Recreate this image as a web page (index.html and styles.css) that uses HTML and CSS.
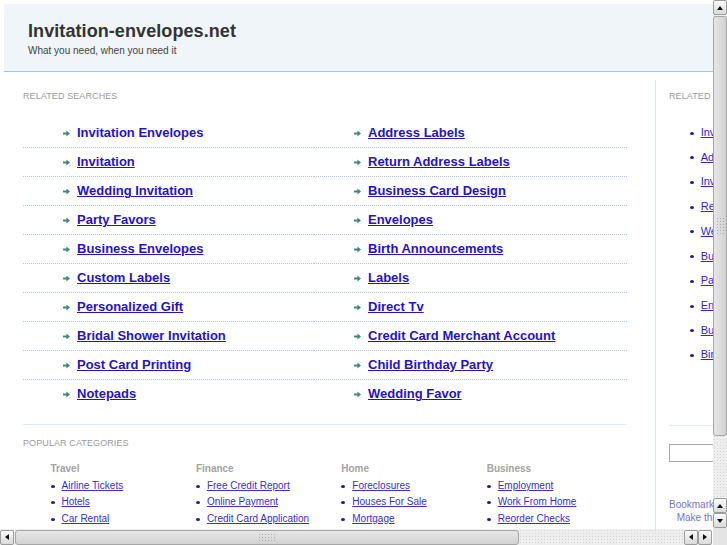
FILE: index.html
```html
<!DOCTYPE html>
<html>
<head>
<meta charset="utf-8">
<title>Invitation-envelopes.net</title>
<link rel="stylesheet" href="styles.css">
</head>
<body>
<div class="page">
  <div class="header">
    <h1 class="title">Invitation-envelopes.net</h1>
    <div class="tagline">What you need, when you need it</div>
  </div>
  <div class="content">
    <div class="main">
      <div class="label">Related Searches</div>
      <div class="links">
        <ul>
          <li><svg class="arrow" viewBox="0 0 7 7"><path d="M0 2.6h3.4V0.4L7 3.5 3.4 6.6V4.4H0z"/></svg><a class="plain" href="#">Invitation Envelopes</a></li>
          <li><svg class="arrow" viewBox="0 0 7 7"><path d="M0 2.6h3.4V0.4L7 3.5 3.4 6.6V4.4H0z"/></svg><a href="#">Invitation</a></li>
          <li><svg class="arrow" viewBox="0 0 7 7"><path d="M0 2.6h3.4V0.4L7 3.5 3.4 6.6V4.4H0z"/></svg><a href="#">Wedding Invitation</a></li>
          <li><svg class="arrow" viewBox="0 0 7 7"><path d="M0 2.6h3.4V0.4L7 3.5 3.4 6.6V4.4H0z"/></svg><a href="#">Party Favors</a></li>
          <li><svg class="arrow" viewBox="0 0 7 7"><path d="M0 2.6h3.4V0.4L7 3.5 3.4 6.6V4.4H0z"/></svg><a href="#">Business Envelopes</a></li>
          <li><svg class="arrow" viewBox="0 0 7 7"><path d="M0 2.6h3.4V0.4L7 3.5 3.4 6.6V4.4H0z"/></svg><a href="#">Custom Labels</a></li>
          <li><svg class="arrow" viewBox="0 0 7 7"><path d="M0 2.6h3.4V0.4L7 3.5 3.4 6.6V4.4H0z"/></svg><a href="#">Personalized Gift</a></li>
          <li><svg class="arrow" viewBox="0 0 7 7"><path d="M0 2.6h3.4V0.4L7 3.5 3.4 6.6V4.4H0z"/></svg><a href="#">Bridal Shower Invitation</a></li>
          <li><svg class="arrow" viewBox="0 0 7 7"><path d="M0 2.6h3.4V0.4L7 3.5 3.4 6.6V4.4H0z"/></svg><a href="#">Post Card Printing</a></li>
          <li><svg class="arrow" viewBox="0 0 7 7"><path d="M0 2.6h3.4V0.4L7 3.5 3.4 6.6V4.4H0z"/></svg><a href="#">Notepads</a></li>
        </ul>
        <ul>
          <li><svg class="arrow" viewBox="0 0 7 7"><path d="M0 2.6h3.4V0.4L7 3.5 3.4 6.6V4.4H0z"/></svg><a href="#">Address Labels</a></li>
          <li><svg class="arrow" viewBox="0 0 7 7"><path d="M0 2.6h3.4V0.4L7 3.5 3.4 6.6V4.4H0z"/></svg><a href="#">Return Address Labels</a></li>
          <li><svg class="arrow" viewBox="0 0 7 7"><path d="M0 2.6h3.4V0.4L7 3.5 3.4 6.6V4.4H0z"/></svg><a href="#">Business Card Design</a></li>
          <li><svg class="arrow" viewBox="0 0 7 7"><path d="M0 2.6h3.4V0.4L7 3.5 3.4 6.6V4.4H0z"/></svg><a href="#">Envelopes</a></li>
          <li><svg class="arrow" viewBox="0 0 7 7"><path d="M0 2.6h3.4V0.4L7 3.5 3.4 6.6V4.4H0z"/></svg><a href="#">Birth Announcements</a></li>
          <li><svg class="arrow" viewBox="0 0 7 7"><path d="M0 2.6h3.4V0.4L7 3.5 3.4 6.6V4.4H0z"/></svg><a href="#">Labels</a></li>
          <li><svg class="arrow" viewBox="0 0 7 7"><path d="M0 2.6h3.4V0.4L7 3.5 3.4 6.6V4.4H0z"/></svg><a href="#">Direct Tv</a></li>
          <li><svg class="arrow" viewBox="0 0 7 7"><path d="M0 2.6h3.4V0.4L7 3.5 3.4 6.6V4.4H0z"/></svg><a href="#">Credit Card Merchant Account</a></li>
          <li><svg class="arrow" viewBox="0 0 7 7"><path d="M0 2.6h3.4V0.4L7 3.5 3.4 6.6V4.4H0z"/></svg><a href="#">Child Birthday Party</a></li>
          <li><svg class="arrow" viewBox="0 0 7 7"><path d="M0 2.6h3.4V0.4L7 3.5 3.4 6.6V4.4H0z"/></svg><a href="#">Wedding Favor</a></li>
        </ul>
      </div>
      <div class="sep"></div>
      <div class="label popular">Popular Categories</div>
      <div class="cats">
        <div class="cat">
          <h3>Travel</h3>
          <ul>
            <li><a href="#">Airline Tickets</a></li>
            <li><a href="#">Hotels</a></li>
            <li><a href="#">Car Rental</a></li>
          </ul>
        </div>
        <div class="cat">
          <h3>Finance</h3>
          <ul>
            <li><a href="#">Free Credit Report</a></li>
            <li><a href="#">Online Payment</a></li>
            <li><a href="#">Credit Card Application</a></li>
          </ul>
        </div>
        <div class="cat">
          <h3>Home</h3>
          <ul>
            <li><a href="#">Foreclosures</a></li>
            <li><a href="#">Houses For Sale</a></li>
            <li><a href="#">Mortgage</a></li>
          </ul>
        </div>
        <div class="cat">
          <h3>Business</h3>
          <ul>
            <li><a href="#">Employment</a></li>
            <li><a href="#">Work From Home</a></li>
            <li><a href="#">Reorder Checks</a></li>
          </ul>
        </div>
      </div>
    </div>
    <div class="side">
      <div class="label">Related Searches</div>
      <ul>
        <li><a href="#">Invitation Envelopes</a></li>
        <li><a href="#">Address Labels</a></li>
        <li><a href="#">Invitation</a></li>
        <li><a href="#">Return Address Labels</a></li>
        <li><a href="#">Wedding Invitation</a></li>
        <li><a href="#">Business Card Design</a></li>
        <li><a href="#">Party Favors</a></li>
        <li><a href="#">Envelopes</a></li>
        <li><a href="#">Business Envelopes</a></li>
        <li><a href="#">Birth Announcements</a></li>
      </ul>
      <div class="side-sep"></div>
      <input class="search" type="text">
      <div class="bookmark">Bookmark this page</div>
      <div class="bookmark indent">Make this your homepage</div>
    </div>
  </div>
</div>

<div class="vscroll">
  <div class="btn"><span class="tri up"></span></div>
  <div class="thumb vthumb"><span class="grip vgrip"></span></div>
  <div class="track"></div>
  <div class="btn"><span class="tri up"></span></div>
  <div class="btn"><span class="tri down"></span></div>
</div>
<div class="hscroll">
  <div class="btn"><span class="tri left"></span></div>
  <div class="thumb hthumb"><span class="grip hgrip"></span></div>
  <div class="track"></div>
  <div class="btn"><span class="tri left"></span></div>
  <div class="btn"><span class="tri right"></span></div>
</div>
<div class="corner"></div>
</body>
</html>
```

FILE: styles.css
```css
html, body {
  margin: 0;
  padding: 0;
  overflow: hidden;
  background: #fff;
  font-family: "Liberation Sans", Arial, sans-serif;
}

.page {
  width: 800px;
  padding: 4px 0 0 4px;
}

.header {
  box-sizing: border-box;
  height: 68px;
  padding: 17px 0 0 24px;
  background: #eff5f8;
  border-bottom: 1px solid #a6bee4;
}

.title {
  margin: 0;
  font-size: 18px;
  line-height: 20px;
  font-weight: bold;
  color: #333;
  letter-spacing: 0.08px;
}

.tagline {
  margin-top: 4px;
  font-size: 10px;
  line-height: 12px;
  color: #444;
}

.content {
  display: flex;
  margin-top: 8px;
}

.main {
  box-sizing: border-box;
  width: 652px;
  height: 470px;
  padding: 10.5px 28px 0 19px;
  border-right: 1px solid #dde6ef;
}

.label {
  font-size: 9px;
  line-height: 11px;
  color: #9a9a9a;
  text-transform: uppercase;
  letter-spacing: 0.1px;
  white-space: nowrap;
}

.links {
  display: grid;
  grid-template-columns: 291px 1fr;
  margin-top: 17.8px;
}

.links ul {
  list-style: none;
  margin: 0;
  padding: 0;
}

.links li {
  height: 28px;
  line-height: 28px;
  padding-left: 39.5px;
  border-bottom: 1px dotted #abc6e4;
  font-size: 13px;
  font-weight: bold;
  white-space: nowrap;
}

.links li:last-child {
  border-bottom: none;
}

.arrow {
  width: 7px;
  height: 7px;
  margin-right: 7.5px;
  vertical-align: middle;
  fill: #3a8b7d;
}

.links a {
  color: #2612c9;
  text-decoration: underline;
}

.links a.plain {
  text-decoration: none;
}

.sep {
  margin-top: 16px;
  border-top: 1px solid #e3ebf4;
}

.popular {
  margin-top: 13.2px;
}

.cats {
  display: grid;
  grid-template-columns: repeat(4, 145.4px);
  padding-left: 27.5px;
  margin-top: 12.7px;
}

.cats h3 {
  margin: 0;
  font-size: 10px;
  line-height: 14px;
  font-weight: bold;
  color: #a3a3a3;
}

.cats ul {
  list-style: none;
  margin: 0;
  padding: 1.5px 0 0;
}

.cats li {
  font-size: 10px;
  line-height: 16.6px;
  white-space: nowrap;
}

.cats li::before,
.side li::before {
  content: "";
  display: inline-block;
  width: 4px;
  height: 3px;
  border-radius: 50%;
  background: #1c1c8e;
  margin-right: 7px;
  vertical-align: middle;
}

.cats a {
  color: #3a2ed6;
  text-decoration: underline;
}

.side {
  width: 140px;
  padding: 10.5px 0 0 13px;
}

.side ul {
  list-style: none;
  margin: 18.5px 0 0;
  padding: 0 0 0 21px;
}

.side li {
  font-size: 11px;
  line-height: 24.7px;
  white-space: nowrap;
}

.side li::before {
  margin-right: 6.7px;
}

.side a {
  color: #3424d2;
  text-decoration: underline;
}

.side-sep {
  margin-top: 58px;
  border-top: 1px solid #e3ebf4;
}

.search {
  display: block;
  box-sizing: border-box;
  width: 110px;
  height: 17.5px;
  margin: 18.3px 0 0;
  padding: 0;
  border: 1px solid #a9a9a9;
  background: #fff;
}

.bookmark {
  font-size: 10px;
  line-height: 13px;
  color: #7676c8;
  white-space: nowrap;
}

.search + .bookmark {
  margin-top: 36.4px;
}

.indent {
  padding-left: 7.7px;
}

/* fake window scrollbars drawn over the page */
.vscroll,
.hscroll {
  position: fixed;
  display: flex;
  background-color: #eeeeee;
  background-image: radial-gradient(circle, #d6d6d6 0.6px, transparent 0.8px);
  background-size: 3px 3px;
}

.vscroll {
  left: 713px;
  top: 0;
  width: 14px;
  height: 528px;
  flex-direction: column;
}

.hscroll {
  left: 0;
  top: 529px;
  width: 712px;
  height: 16px;
  flex-direction: row;
  align-items: center;
}

.corner {
  position: fixed;
  left: 713px;
  top: 528px;
  width: 14px;
  height: 17px;
  background: #e4e4e4;
}

.btn {
  box-sizing: border-box;
  flex: none;
  display: flex;
  align-items: center;
  justify-content: center;
  border: 1px solid #9c9c9c;
  border-radius: 2px;
  background: linear-gradient(#fbfbfb, #dadada);
}

.vscroll .btn {
  width: 14px;
  height: 15px;
}

.hscroll .btn {
  width: 14px;
  height: 15px;
}

.tri {
  width: 0;
  height: 0;
  border: 3px solid transparent;
}

.tri.up {
  border-bottom: 4px solid #111;
  border-top-width: 0;
}

.tri.down {
  border-top: 4px solid #111;
  border-bottom-width: 0;
}

.tri.left {
  border-right: 4px solid #111;
  border-left-width: 0;
}

.tri.right {
  border-left: 4px solid #111;
  border-right-width: 0;
}

.thumb {
  box-sizing: border-box;
  flex: none;
  display: flex;
  align-items: center;
  justify-content: center;
  border: 1px solid #a6a6a6;
  border-radius: 3px;
}

.vthumb {
  width: 14px;
  height: 420px;
  margin-top: 1px;
  background: linear-gradient(to right, #e6e6e6, #d2d2d2);
}

.hthumb {
  width: 504px;
  height: 15px;
  margin-left: 1px;
  background: linear-gradient(#e6e6e6, #d2d2d2);
}

.grip {
  background-image: radial-gradient(circle, #aaaaaa 0.7px, transparent 0.9px);
  background-size: 3px 3px;
}

.vgrip {
  width: 9px;
  height: 18px;
}

.hgrip {
  width: 18px;
  height: 9px;
}

.track {
  flex: 1;
}
```
